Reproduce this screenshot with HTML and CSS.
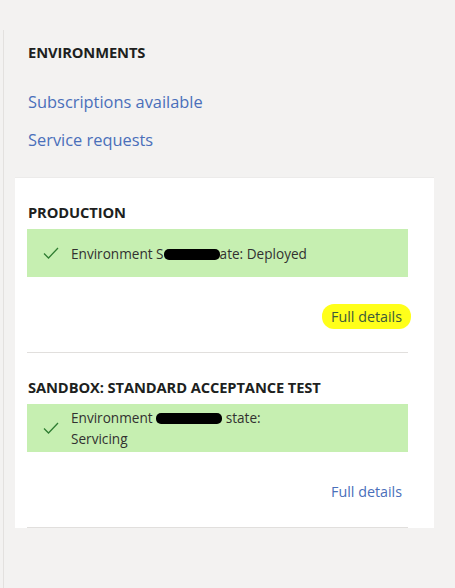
FILE: index.html
```html
<!DOCTYPE html>
<html>
<head>
<meta charset="utf-8">
<link rel="stylesheet" href="styles.css">
</head>
<body>
<div class="sidebar">
  <h2 class="heading">ENVIRONMENTS</h2>
  <a class="link">Subscriptions available</a>
  <a class="link">Service requests</a>
  <div class="card">
    <section class="env">
      <h3 class="env-title">PRODUCTION</h3>
      <div class="status">
        <svg class="check" viewBox="0 0 16 12" width="16" height="12"><path d="M1 6.5 L5.5 11 L15 1" fill="none" stroke="#2f7d32" stroke-width="1.3"/></svg>
        <span class="status-text">Environment S<span class="redact r1"></span>ate: Deployed</span>
      </div>
      <div class="details-row"><a class="details highlight">Full details</a></div>
    </section>
    <section class="env">
      <h3 class="env-title">SANDBOX: STANDARD ACCEPTANCE TEST</h3>
      <div class="status">
        <svg class="check" viewBox="0 0 16 12" width="16" height="12"><path d="M1 6.5 L5.5 11 L15 1" fill="none" stroke="#2f7d32" stroke-width="1.3"/></svg>
        <span class="status-text">Environment <span class="redact r2"></span> state:<br>Servicing</span>
      </div>
      <div class="details-row"><a class="details">Full details</a></div>
    </section>
  </div>
</div>
</body>
</html>
```
FILE: styles.css
```css
html, body {
  margin: 0;
  padding: 0;
  background: #f3f2f1;
  height: 100%;
}
body {
  font-family: "Open Sans", "Noto Sans", sans-serif;
  color: #201f1e;
}
.sidebar {
  margin-left: 3px;
  margin-top: 30px;
  border-left: 1px solid #e3e1df;
  min-height: 558px;
  box-sizing: border-box;
  padding-top: 11px;
  display: flex;
  flex-direction: column;
  align-items: flex-start;
}
.heading {
  margin: 0 0 0 24px;
  font-size: 14.7px;
  font-weight: 700;
  line-height: 22px;
  letter-spacing: -0.1px;
}
.link {
  margin-left: 24px;
  font-size: 16.4px;
  line-height: 22px;
  color: #4a6fba;
  margin-top: 28px;
}
.link + .link { margin-top: 16px; }
.card {
  margin-top: 26px;
  margin-left: 11px;
  width: 419px;
  background: #fff;
  box-sizing: border-box;
  padding: 0 26px 0 12px;
  border-top: 1px solid #ecebea;
}
.env {
  border-bottom: 1px solid #e1dfdd;
  padding-top: 23px;
  padding-bottom: 23px;
}
.env-title {
  margin: 0 0 6px 1px;
  font-size: 14.7px;
  font-weight: 700;
  line-height: 22px;
  letter-spacing: -0.1px;
}
.status {
  background: #c6efb1;
  min-height: 48px;
  display: flex;
  align-items: center;
  padding-left: 16px;
  gap: 12px;
}
.check { flex: none; }
.status-text {
  font-size: 13.6px;
  line-height: 21px;
  color: #323130;
}
.redact {
  display: inline-block;
  height: 11px;
  background: #000;
  border-radius: 5px;
  vertical-align: -1px;
}
.r1 { width: 56px; }
.r2 { width: 66px; }
.details-row {
  display: flex;
  justify-content: flex-end;
  margin-top: 27px;
}
.details {
  font-size: 14.3px;
  line-height: 20px;
  color: #4a6fba;
  padding: 3px 9px 2px;
  margin-right: -3px;
}
.highlight {
  background: #ffff1a;
  border-radius: 12px;
  color: #3d5a3a;
}
```
